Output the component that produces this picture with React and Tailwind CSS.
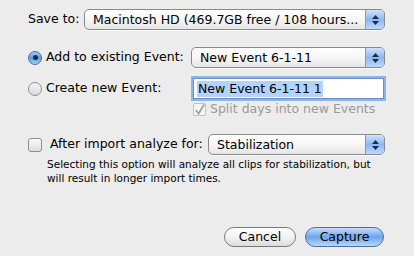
import React from 'react';

const font = { fontFamily: '"DejaVu Sans", "Liberation Sans", sans-serif' };

function Stepper() {
  return (
    <div className="flex h-full w-[19px] shrink-0 flex-col items-center justify-center gap-[2px] rounded-r-[4px] border-l border-[#7b9bc9] bg-gradient-to-b from-[#cfe3fb] via-[#8db8ef] to-[#bcd8fb]">
      <svg width="7" height="4" viewBox="0 0 7 4">
        <path d="M0 4 L3.5 0 L7 4 Z" fill="#1c2b48" />
      </svg>
      <svg width="7" height="4" viewBox="0 0 7 4">
        <path d="M0 0 L3.5 4 L7 0 Z" fill="#1c2b48" />
      </svg>
    </div>
  );
}

function Popup({ label, width }) {
  return (
    <div
      className={`flex h-[21px] shrink-0 items-center rounded-[5px] border border-[#8a8a8a] bg-gradient-to-b from-white via-[#f6f6f6] to-[#e6e6e6] shadow-[0_1px_0_rgba(255,255,255,0.8)] ${width}`}
    >
      <span className="min-w-0 flex-1 whitespace-nowrap pl-[8px] text-[12.5px] leading-[15px] text-black">{label}</span>
      <Stepper />
    </div>
  );
}

function Radio({ checked }) {
  if (checked) {
    return (
      <span className="flex h-[14px] w-[14px] shrink-0 items-center justify-center rounded-full border border-[#4a6c9e] bg-gradient-to-b from-[#a9cbf3] via-[#5f9be6] to-[#a8cdf7]">
        <span className="h-[5px] w-[5px] rounded-full bg-[#1b2a40]" />
      </span>
    );
  }
  return (
    <span className="h-[14px] w-[14px] shrink-0 rounded-full border border-[#8e8e8e] bg-gradient-to-b from-[#f4f4f4] to-[#dcdcdc]" />
  );
}

export default function App() {
  return (
    <div
      className="flex h-[256px] w-[414px] flex-col whitespace-nowrap bg-[#ececec] pl-[28px] pr-[29px] pt-[9px] text-[12.5px] text-black"
      style={font}
    >
      <div className="flex items-center">
        <span>Save to:</span>
        <div className="ml-auto">
          <Popup label="Macintosh HD (469.7GB free / 108 hours..." width="w-[301px]" />
        </div>
      </div>

      <div className="mt-[17px] flex items-center">
        <Radio checked />
        <span className="ml-[4px]">Add to existing Event:</span>
        <div className="ml-auto">
          <Popup label="New Event 6-1-11" width="w-[194px]" />
        </div>
      </div>

      <div className="mt-[10px] flex items-center">
        <Radio />
        <span className="ml-[4px]">Create new Event:</span>
        <div className="ml-auto mr-[1px] flex h-[21px] w-[191px] shrink-0 items-center border border-[#6d8fc4] bg-white pl-[3px] shadow-[0_0_0_2px_#8fb4e6]">
          <span className="bg-[#b4d3fb] px-[1px] leading-[16px]">New Event 6-1-11 1</span>
        </div>
      </div>

      <div className="mt-[3px] flex h-[15px] items-center pl-[165px] text-[#9a9a9a]">
        <span className="flex h-[13px] w-[13px] shrink-0 items-center justify-center rounded-[2px] border border-[#c2c2c2] bg-[#f4f4f4]">
          <svg width="12" height="12" viewBox="0 0 12 12">
            <path d="M2 6 L5 10 L11 0" stroke="#a0a0a0" strokeWidth="1.8" fill="none" />
          </svg>
        </span>
        <span className="ml-[4px]">Split days into new Events</span>
      </div>

      <div className="mt-[17px] flex items-center">
        <span className="h-[14px] w-[14px] shrink-0 rounded-[3px] border border-[#8e8e8e] bg-gradient-to-b from-[#fbfbfb] to-[#dedede]" />
        <span className="ml-[8px]">After import analyze for:</span>
        <div className="ml-auto">
          <Popup label="Stabilization" width="w-[177px]" />
        </div>
      </div>

      <p className="ml-[19px] mt-[2px] text-[10.5px] leading-[14px]">
        Selecting this option will analyze all clips for stabilization, but
        <br />
        will result in longer import times.
      </p>

      <div className="mt-auto mb-[9px] flex justify-end gap-[9px]">
        <button className="h-[20px] w-[72px] rounded-full border border-[#7a7a7a] bg-gradient-to-b from-white via-[#f2f2f2] to-[#dcdcdc] text-[12.5px] leading-none">
          Cancel
        </button>
        <button className="mr-[1px] h-[20px] w-[79px] rounded-full border border-[#4c6f9f] bg-gradient-to-b from-[#c6def9] via-[#6aa6ec] to-[#b7d9fb] text-[12.5px] leading-none">
          Capture
        </button>
      </div>
    </div>
  );
}
